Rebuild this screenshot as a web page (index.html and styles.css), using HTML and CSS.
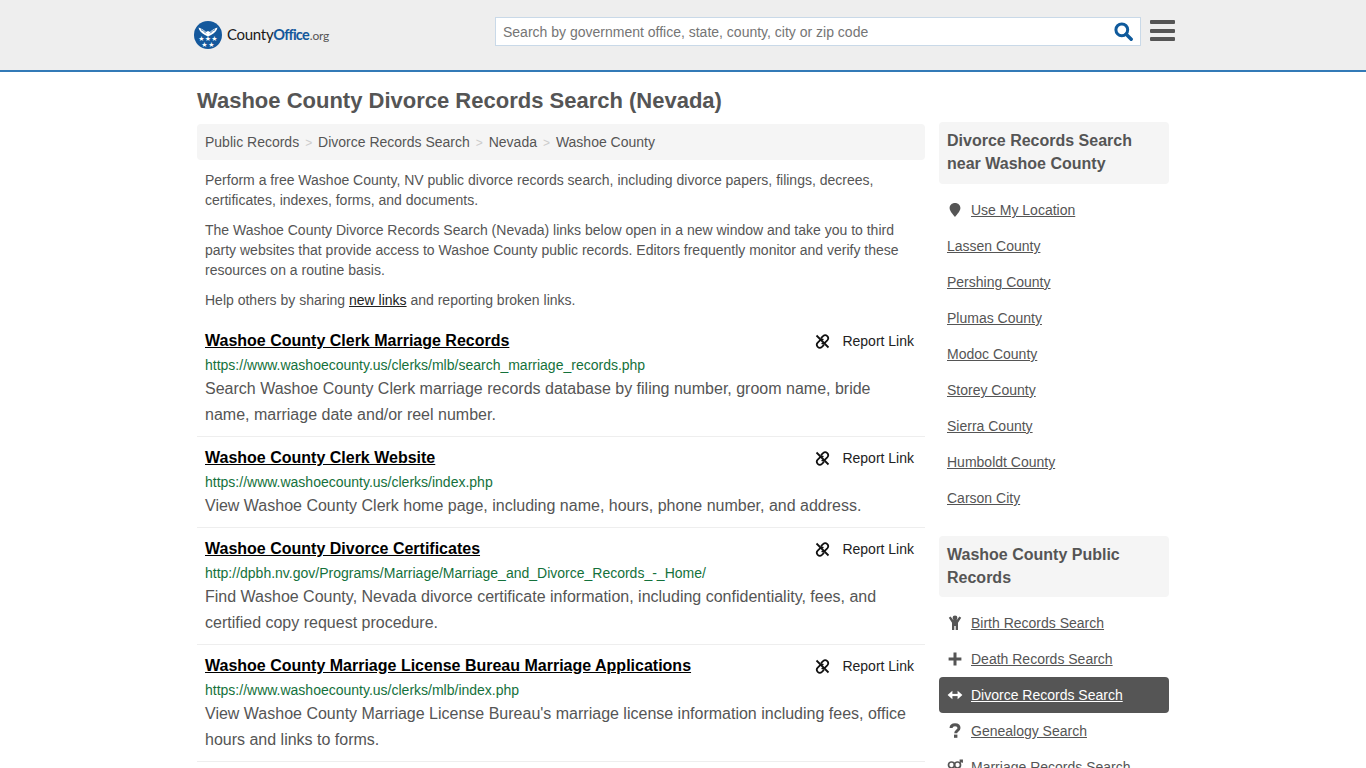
FILE: index.html
```html
<!DOCTYPE html>
<html lang="en">
<head>
    <meta charset="UTF-8">
    <title>Washoe County Divorce Records Search (Nevada)</title>
    <link rel="stylesheet" href="styles.css">
</head>
<body>
<div class="header">
    <div class="header-in">
        <a class="logo" href="#">
            <svg class="logo-mark" width="28" height="28" viewBox="0 0 28 28">
                <circle cx="14" cy="14" r="14" fill="#14589c"/>
                <path d="M4.5 6.5 C7 7.5 10 8.5 12 11 L14 10 L16 11 C18 8.5 21 7.5 23.5 6.5 C23 9.5 20.5 12.5 17 14 L14 15.5 L11 14 C7.5 12.5 5 9.5 4.5 6.5 Z" fill="#fff"/>
                <path d="M7 8.6 C9 9.6 10.5 10.5 12 12.4 M21 8.6 C19 9.6 17.5 10.5 16 12.4" stroke="#14589c" stroke-width=".8" fill="none"/>
                <g fill="#fff" font-size="7" font-family="'DejaVu Sans',sans-serif" text-anchor="middle">
                    <text x="7.5" y="20">★</text>
                    <text x="14" y="20">★</text>
                    <text x="20.5" y="20">★</text>
                    <text x="10.5" y="26">★</text>
                    <text x="17.5" y="26">★</text>
                </g>
            </svg>
            <span class="logo-text">County<b>Office</b><i>.org</i></span>
        </a>
        <div class="search">
            <input class="search-input" type="text" placeholder="Search by government office, state, county, city or zip code">
            <svg class="search-icon" width="19" height="19" viewBox="0 0 19 19">
                <circle cx="7.8" cy="7.8" r="5.9" fill="none" stroke="#0f5a9c" stroke-width="3"/>
                <path d="M12.2 12.2 L17.2 17.2" stroke="#0f5a9c" stroke-width="3.4" stroke-linecap="round"/>
            </svg>
        </div>
        <div class="burger"><span></span><span></span><span></span></div>
    </div>
</div>

<div class="container">
    <h1>Washoe County Divorce Records Search (Nevada)</h1>
    <div class="row">
        <div class="main">
            <div class="crumbs">
                <a href="#">Public Records</a><span class="sep">&gt;</span>
                <a href="#">Divorce Records Search</a><span class="sep">&gt;</span>
                <a href="#">Nevada</a><span class="sep">&gt;</span>
                <a href="#">Washoe County</a>
            </div>
            <div class="intro">
                <p>Perform a free Washoe County, NV public divorce records search, including divorce papers, filings, decrees, certificates, indexes, forms, and documents.</p>
                <p>The Washoe County Divorce Records Search (Nevada) links below open in a new window and take you to third party websites that provide access to Washoe County public records. Editors frequently monitor and verify these resources on a routine basis.</p>
                <p>Help others by sharing <a href="#">new links</a> and reporting broken links.</p>
            </div>

            <div class="result">
                <div class="result-top">
                    <a class="result-title" href="#">Washoe County Clerk Marriage Records</a>
                    <a class="report" href="#">
                        <svg class="unlink" width="15" height="15" viewBox="0 0 16 16"><use href="#i-unlink"/></svg>
                        Report Link
                    </a>
                </div>
                <div class="result-url">https://www.washoecounty.us/clerks/mlb/search_marriage_records.php</div>
                <div class="result-desc">Search Washoe County Clerk marriage records database by filing number, groom name, bride name, marriage date and/or reel number.</div>
            </div>
            <div class="result">
                <div class="result-top">
                    <a class="result-title" href="#">Washoe County Clerk Website</a>
                    <a class="report" href="#">
                        <svg class="unlink" width="15" height="15" viewBox="0 0 16 16"><use href="#i-unlink"/></svg>
                        Report Link
                    </a>
                </div>
                <div class="result-url">https://www.washoecounty.us/clerks/index.php</div>
                <div class="result-desc">View Washoe County Clerk home page, including name, hours, phone number, and address.</div>
            </div>
            <div class="result">
                <div class="result-top">
                    <a class="result-title" href="#">Washoe County Divorce Certificates</a>
                    <a class="report" href="#">
                        <svg class="unlink" width="15" height="15" viewBox="0 0 16 16"><use href="#i-unlink"/></svg>
                        Report Link
                    </a>
                </div>
                <div class="result-url">http://dpbh.nv.gov/Programs/Marriage/Marriage_and_Divorce_Records_-_Home/</div>
                <div class="result-desc">Find Washoe County, Nevada divorce certificate information, including confidentiality, fees, and certified copy request procedure.</div>
            </div>
            <div class="result">
                <div class="result-top">
                    <a class="result-title" href="#">Washoe County Marriage License Bureau Marriage Applications</a>
                    <a class="report" href="#">
                        <svg class="unlink" width="15" height="15" viewBox="0 0 16 16"><use href="#i-unlink"/></svg>
                        Report Link
                    </a>
                </div>
                <div class="result-url">https://www.washoecounty.us/clerks/mlb/index.php</div>
                <div class="result-desc">View Washoe County Marriage License Bureau's marriage license information including fees, office hours and links to forms.</div>
            </div>
        </div>

        <div class="side">
            <div class="side-head first">Divorce Records Search near Washoe County</div>
            <ul class="side-list">
                <li class="with-icon">
                    <svg width="14" height="16" viewBox="0 0 14 16"><path d="M7 1 C10.2 1 12.4 3.2 12.4 6 C12.4 9 9 12.5 7 15 C5 12.5 1.6 9 1.6 6 C1.6 3.2 3.8 1 7 1 Z" fill="#555"/></svg>
                    <a href="#">Use My Location</a>
                </li>
                <li><a href="#">Lassen County</a></li>
                <li><a href="#">Pershing County</a></li>
                <li><a href="#">Plumas County</a></li>
                <li><a href="#">Modoc County</a></li>
                <li><a href="#">Storey County</a></li>
                <li><a href="#">Sierra County</a></li>
                <li><a href="#">Humboldt County</a></li>
                <li><a href="#">Carson City</a></li>
            </ul>

            <div class="side-head second">Washoe County Public Records</div>
            <ul class="side-list">
                <li class="with-icon">
                    <svg width="14" height="16" viewBox="0 0 14 16"><circle cx="7" cy="3" r="2.4" fill="#555"/><path d="M.8 2.8 L2.6 1.6 L5.2 5 H8.8 L11.4 1.6 L13.2 2.8 L10 7.8 V15 H7.7 V11 H6.3 V15 H4 V7.8 Z" fill="#555"/></svg>
                    <a href="#">Birth Records Search</a>
                </li>
                <li class="with-icon">
                    <svg width="14" height="16" viewBox="0 0 14 16"><path d="M7 1.6 V14.4 M.6 8 H13.4" stroke="#555" stroke-width="3" fill="none"/></svg>
                    <a href="#">Death Records Search</a>
                </li>
                <li class="with-icon active">
                    <svg width="14" height="16" viewBox="0 0 14 16"><path d="M3 8 H11" stroke="#fff" stroke-width="2.2"/><path d="M-.4 8 L4.4 3.8 V12.2 Z M14.4 8 L9.6 3.8 V12.2 Z" fill="#fff"/></svg>
                    <a href="#">Divorce Records Search</a>
                </li>
                <li class="with-icon">
                    <svg width="14" height="16" viewBox="0 0 14 16"><path d="M3 5 C3.2 2.6 5 1.8 7 1.8 C9.4 1.8 11 3.1 11 5 C11 7.8 7.7 7.4 7.7 10.2" stroke="#555" stroke-width="3" fill="none"/><rect x="6" y="11.6" width="3.4" height="3.2" fill="#555"/></svg>
                    <a href="#">Genealogy Search</a>
                </li>
                <li class="with-icon">
                    <svg width="16" height="16" viewBox="0 0 16 16"><circle cx="4.5" cy="6" r="3" fill="none" stroke="#555" stroke-width="1.7"/><circle cx="10.5" cy="6" r="3" fill="none" stroke="#555" stroke-width="1.7"/><path d="M4.5 9 V14 M2.5 12 H6.5 M12.5 3.8 L15 1.4 M12.6 1.2 H15.2 V3.8" stroke="#555" stroke-width="1.5" fill="none"/></svg>
                    <a href="#">Marriage Records Search</a>
                </li>
            </ul>
        </div>
    </div>
</div>

<svg class="defs" width="0" height="0">
    <symbol id="i-unlink" viewBox="0 0 16 16">
        <path d="M6.4 4.4 L8.6 2.2 C9.9 1 11.8 1 13.1 2.2 C14.3 3.5 14.3 5.4 13.1 6.7 L10.4 9.4 C9.4 10.4 8.2 10.5 7 9.9 M9 6.1 C7.8 5.5 6.6 5.6 5.6 6.6 L2.9 9.3 C1.7 10.6 1.7 12.5 2.9 13.8 C4.2 15 6.1 15 7.4 13.8 L9.6 11.6" fill="none" stroke="#111" stroke-width="1.9"/>
        <path d="M1.6 1.6 L14.4 14.4" stroke="#111" stroke-width="1.9"/>
    </symbol>
</svg>
</body>
</html>
```

FILE: styles.css
```css
html, body{
    margin: 0;
    padding: 0;
    height: 100%;
    overflow: hidden;
}
body{
    font-family: "Liberation Sans", Arial, sans-serif;
    font-size: 14px;
    line-height: 20px;
    color: #555;
    background: #fff;
}
a{
    color: inherit;
}
.defs{
    position: absolute;
}

/* header */
.header{
    height: 70px;
    background: #eee;
    border-bottom: 2px solid #337ab7;
}
.header-in{
    display: flex;
    align-items: flex-start;
    margin-left: 194px;
    width: 981px;
}
.logo{
    display: flex;
    align-items: center;
    width: 301px;
    margin-top: 21px;
    text-decoration: none;
}
.logo-text{
    margin-left: 5px;
    font-family: Lato, sans-serif;
    font-size: 15px;
    letter-spacing: -.3px;
    color: #1a1a1a;
}
.logo-text b{
    font-size: 14.5px;
    font-weight: 700;
    letter-spacing: -.8px;
    color: #14589c;
}
.logo-text i{
    margin-left: 1px;
    font-style: normal;
    font-size: 12px;
    letter-spacing: -.2px;
    color: #555;
}
.search{
    display: flex;
    align-items: center;
    width: 644px;
    height: 27px;
    margin-top: 17px;
    background: #fff;
    border: 1px solid #c9d9e8;
}
.search-input{
    flex-grow: 1;
    height: 100%;
    padding: 0 7px;
    border: 0;
    outline: 0;
    background: none;
    font-family: inherit;
    font-size: 14px;
}
.search-input::placeholder{
    color: #757575;
}
.search-icon{
    flex-shrink: 0;
    margin-right: 7px;
}
.burger{
    display: flex;
    flex-direction: column;
    gap: 4.5px;
    width: 25px;
    margin: 20px 0 0 9px;
}
.burger span{
    height: 4px;
    border-radius: 1px;
    background: #555;
}

/* page */
.container{
    width: 972px;
    margin: 0 auto;
}
h1{
    margin: 17px 0 9px;
    font-size: 22px;
    line-height: 24px;
    font-weight: 700;
    color: #555;
}
.row{
    display: flex;
    justify-content: space-between;
    align-items: flex-start;
}
.main{
    width: 728px;
}
.side{
    width: 230px;
}

.crumbs{
    height: 20px;
    margin-top: 2px;
    padding: 8px;
    background: #f5f5f5;
    border-radius: 4px;
}
.crumbs a{
    text-decoration: none;
}
.sep{
    margin: 0 2px 0 6px;
    font-size: 12px;
    line-height: 1;
    color: #ccc;
}
.intro{
    padding: 0 8px;
    margin-top: 10px;
}
.intro p{
    margin: 0 0 10px;
}
.intro a{
    color: #222;
}

.result{
    padding: 11px 11px 8px 8px;
    border-bottom: 1px solid #eee;
}
.result-top{
    display: flex;
    justify-content: space-between;
    align-items: center;
    height: 20px;
}
.result-title{
    font-size: 16px;
    font-weight: 700;
    color: #000;
}
.report{
    display: flex;
    align-items: center;
    gap: 11px;
    color: #222;
    text-decoration: none;
}
.unlink{
    margin-right: 1px;
}
.result-url{
    margin: 4px 0 1px;
    color: #14713b;
}
.result-desc{
    font-size: 16px;
    line-height: 26px;
}

/* sidebar */
.side-head{
    padding: 7px 8px 8px;
    background: #f5f5f5;
    border-radius: 4px;
    font-size: 16px;
    line-height: 23px;
    font-weight: 700;
    color: #555;
}
.side-head.first{
    padding-bottom: 9px;
}
.side-head.second{
    margin-top: 20px;
}
.side-list{
    list-style: none;
    margin: 8px 0 0;
    padding: 0;
}
.side-list li{
    display: flex;
    align-items: center;
    height: 36px;
    padding-left: 8px;
}
.side-list li.with-icon svg{
    width: 16px;
    margin-right: 8px;
}
.side-list li.active{
    background: #555;
    border-radius: 4px;
    color: #fff;
}
```
